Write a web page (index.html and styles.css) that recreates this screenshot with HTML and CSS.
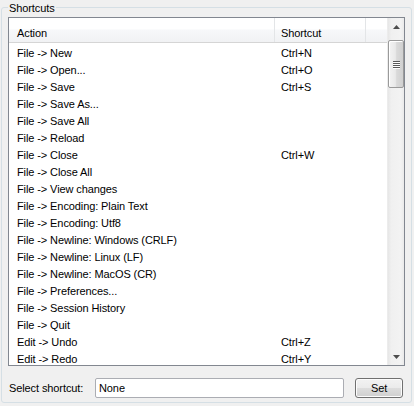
FILE: index.html
```html
<!DOCTYPE html>
<html>
<head>
<meta charset="utf-8">
<link rel="stylesheet" href="styles.css">
</head>
<body>
<fieldset class="group">
  <legend class="group-title">Shortcuts</legend>
  <div class="listbox">
    <div class="list-main">
      <div class="header">
        <div class="hcell col-action">Action</div>
        <div class="hcell col-shortcut">Shortcut</div>
        <div class="hcell col-rest"></div>
      </div>
      <div class="rows">
        <div class="row"><span class="c-action">File -&gt; New</span><span class="c-short">Ctrl+N</span></div>
        <div class="row"><span class="c-action">File -&gt; Open...</span><span class="c-short">Ctrl+O</span></div>
        <div class="row"><span class="c-action">File -&gt; Save</span><span class="c-short">Ctrl+S</span></div>
        <div class="row"><span class="c-action">File -&gt; Save As...</span><span class="c-short"></span></div>
        <div class="row"><span class="c-action">File -&gt; Save All</span><span class="c-short"></span></div>
        <div class="row"><span class="c-action">File -&gt; Reload</span><span class="c-short"></span></div>
        <div class="row"><span class="c-action">File -&gt; Close</span><span class="c-short">Ctrl+W</span></div>
        <div class="row"><span class="c-action">File -&gt; Close All</span><span class="c-short"></span></div>
        <div class="row"><span class="c-action">File -&gt; View changes</span><span class="c-short"></span></div>
        <div class="row"><span class="c-action">File -&gt; Encoding: Plain Text</span><span class="c-short"></span></div>
        <div class="row"><span class="c-action">File -&gt; Encoding: Utf8</span><span class="c-short"></span></div>
        <div class="row"><span class="c-action">File -&gt; Newline: Windows (CRLF)</span><span class="c-short"></span></div>
        <div class="row"><span class="c-action">File -&gt; Newline: Linux (LF)</span><span class="c-short"></span></div>
        <div class="row"><span class="c-action">File -&gt; Newline: MacOS (CR)</span><span class="c-short"></span></div>
        <div class="row"><span class="c-action">File -&gt; Preferences...</span><span class="c-short"></span></div>
        <div class="row"><span class="c-action">File -&gt; Session History</span><span class="c-short"></span></div>
        <div class="row"><span class="c-action">File -&gt; Quit</span><span class="c-short"></span></div>
        <div class="row"><span class="c-action">Edit -&gt; Undo</span><span class="c-short">Ctrl+Z</span></div>
        <div class="row"><span class="c-action">Edit -&gt; Redo</span><span class="c-short">Ctrl+Y</span></div>
      </div>
    </div>
    <div class="scrollbar">
      <div class="sb-btn"><svg width="7" height="4" viewBox="0 0 7 4"><path d="M0 4 L3.5 0 L7 4 Z" fill="#4d4d4d"/></svg></div>
      <div class="sb-track">
        <div class="sb-thumb">
          <div class="grip"></div><div class="grip"></div><div class="grip"></div><div class="grip"></div>
        </div>
      </div>
      <div class="sb-btn"><svg width="7" height="4" viewBox="0 0 7 4"><path d="M0 0 L7 0 L3.5 4 Z" fill="#4d4d4d"/></svg></div>
    </div>
  </div>
  <div class="bottom">
    <span class="label">Select shortcut:</span>
    <div class="input">None</div>
    <div class="button">Set</div>
  </div>
</fieldset>
</body>
</html>
```

FILE: styles.css
```css
html, body {
  margin: 0;
  padding: 0;
}
body {
  width: 414px;
  height: 406px;
  background: #f0f0f0;
  font-family: "Liberation Sans", Arial, sans-serif;
  font-size: 11px;
  letter-spacing: -0.1px;
  color: #000;
  padding: 0 2px 0 1px;
  box-sizing: border-box;
  overflow: hidden;
}
.group {
  margin: 0;
  border: 1px solid #d5dfe5;
  border-radius: 3px;
  padding: 3px 6px 0 6px;
  height: 403px;
  box-sizing: border-box;
  display: flex;
  flex-direction: column;
}
.group-title {
  padding: 0 1px;
  margin-left: 0;
  line-height: 14px;
  height: 14px;
  padding-top: 1px;
  box-sizing: border-box;
}
.listbox {
  border: 1px solid #828790;
  background: #fff;
  height: 349px;
  box-sizing: border-box;
  display: flex;
  overflow: hidden;
}
.list-main {
  flex: 1;
  display: flex;
  flex-direction: column;
  min-width: 0;
}
.header {
  display: flex;
  height: 25px;
  box-sizing: border-box;
  border-bottom: 1px solid #d5d5d5;
  background: linear-gradient(#ffffff 0%, #ffffff 45%, #f7f8fa 50%, #f1f2f4 100%);
}
.hcell {
  box-sizing: border-box;
  line-height: 24px;
  padding-top: 3px;
  border-right: 1px solid #e3e5e7;
}
.col-action {
  width: 266px;
  padding-left: 8px;
}
.col-shortcut {
  width: 91px;
  padding-left: 6px;
}
.col-rest {
  flex: 1;
  border-right: none;
}
.rows {
  padding-top: 2px;
}
.row {
  display: flex;
  height: 17px;
  line-height: 17px;
}
.c-action {
  width: 266px;
  padding-left: 8px;
  box-sizing: border-box;
  white-space: nowrap;
}
.c-short {
  padding-left: 6px;
}
.scrollbar {
  width: 17px;
  display: flex;
  flex-direction: column;
  background: linear-gradient(90deg, #e6e6e6 0%, #f0f0f0 20%, #f3f3f3 80%, #eaeaea 100%);
  border-left: 1px solid #ececec;
  box-sizing: border-box;
}
.sb-btn {
  height: 17px;
  display: flex;
  align-items: center;
  justify-content: center;
}
.sb-track {
  flex: 1;
  padding-top: 5px;
}
.sb-thumb {
  width: 16px;
  height: 48px;
  box-sizing: border-box;
  border: 1px solid #9a9a9a;
  border-radius: 2px;
  background: linear-gradient(90deg, #f3f3f3 0%, #e9e9e9 45%, #d9d9d9 55%, #d0d0d0 100%);
  box-shadow: inset 1px 1px 0 #ffffff;
  display: flex;
  flex-direction: column;
  align-items: center;
  justify-content: center;
  gap: 1px;
}
.grip {
  width: 7px;
  height: 1px;
  background: #5a5a5a;
  box-shadow: 0 1px 0 #ffffff;
}
.bottom {
  display: flex;
  align-items: center;
  margin-top: 12px;
  height: 20px;
}
.label {
  width: 86px;
  padding-left: 1px;
}
.input {
  width: 249px;
  height: 20px;
  box-sizing: border-box;
  border: 1px solid #abadb3;
  border-radius: 2px;
  background: #fff;
  line-height: 18px;
  padding-left: 3px;
}
.button {
  margin-left: 11px;
  width: 48px;
  height: 20px;
  box-sizing: border-box;
  border: 1px solid #707070;
  border-radius: 3px;
  background: linear-gradient(#f2f2f2 0%, #ebebeb 48%, #dddddd 52%, #cfcfcf 100%);
  box-shadow: inset 0 0 0 1px #fcfcfc;
  text-align: center;
  line-height: 18px;
}
```
